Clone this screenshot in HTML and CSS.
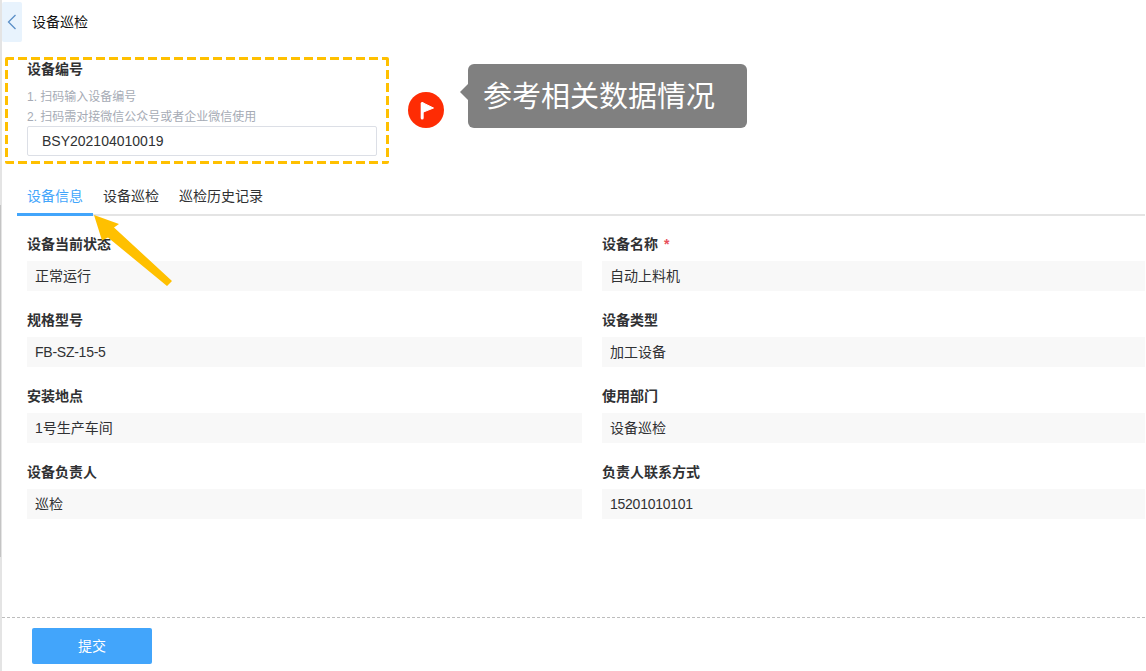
FILE: index.html
```html
<!DOCTYPE html>
<html lang="zh-CN">
<head>
<meta charset="utf-8">
<title>设备巡检</title>
<link rel="stylesheet" href="styles.css">
</head>
<body>
<div class="page">
  <header class="header">
    <button class="back" type="button" aria-label="返回">
      <svg width="10" height="16" viewBox="0 0 10 16"><path d="M8.500 1 L1.500 8 L8.500 15" fill="none" stroke="#5b8fc7" stroke-width="1.3"/></svg>
    </button>
    <h1 class="title">设备巡检</h1>
  </header>

  <section class="code-row">
    <div class="code-box">
      <div class="label">设备编号</div>
      <div class="hint hint-first">1. 扫码输入设备编号</div>
      <div class="hint">2. 扫码需对接微信公众号或者企业微信使用</div>
      <div class="code-input">BSY202104010019</div>
    </div>
    <svg class="flag" width="36" height="36" viewBox="0 0 36 36"><circle cx="18" cy="18" r="18" fill="#fe2c04"/><path d="M14.200 11.500 L14.200 26" stroke="#fff" stroke-width="3" stroke-linecap="round"/><path d="M14.200 10.500 L25.500 16 L14.200 20.500 Z" fill="#fff" stroke="#fff" stroke-width="1" stroke-linejoin="round"/></svg>
    <div class="callout">参考相关数据情况</div>
  </section>

  <nav class="tabs">
    <a class="tab tab-active">设备信息</a>
    <a class="tab">设备巡检</a>
    <a class="tab">巡检历史记录</a>
    <svg class="arrow" width="84" height="80" viewBox="0 0 84 80"><path d="M1 3 L26 12 L21 15.500 L79 69 L74 74 L15 25.500 L9 28.500 Z" fill="#ffc000"/></svg>
  </nav>

  <main class="fields">
    <div class="field"><div class="label">设备当前状态</div><div class="value">正常运行</div></div>
    <div class="field"><div class="label">设备名称<span class="req">*</span></div><div class="value">自动上料机</div></div>
    <div class="field"><div class="label">规格型号</div><div class="value value-code">FB-SZ-15-5</div></div>
    <div class="field"><div class="label">设备类型</div><div class="value">加工设备</div></div>
    <div class="field"><div class="label">安装地点</div><div class="value">1号生产车间</div></div>
    <div class="field"><div class="label">使用部门</div><div class="value">设备巡检</div></div>
    <div class="field"><div class="label">设备负责人</div><div class="value">巡检</div></div>
    <div class="field"><div class="label">负责人联系方式</div><div class="value value-code">15201010101</div></div>
  </main>

  <footer class="footer">
    <button class="submit" type="button">提交</button>
  </footer>
</div>
</body>
</html>
```
FILE: styles.css
```css
* { box-sizing: border-box; }
html, body { margin: 0; height: 100%; overflow: hidden; background: #fff; }
body { font-family: "Liberation Sans", "Noto Sans CJK SC", sans-serif; font-size: 14px; color: #303133; }
.page { position: relative; width: 1145px; height: 671px; border-left: 2px solid #e4e4e4; display: flex; flex-direction: column; }
.page::before { content: ""; position: absolute; left: -2px; top: 205px; width: 1px; height: 352px; background: #c4c4c4; }
.header { display: flex; align-items: center; height: 40px; margin-top: 2px; }
.back { width: 20px; height: 40px; padding: 0; border: 0; border-radius: 2px; background: #e8f3fd; display: flex; align-items: center; justify-content: center; }
.title { margin: 0 0 2px 10px; font-size: 14px; font-weight: 400; color: #111; }
.code-row { display: flex; align-items: flex-start; margin: 15px 0 0 3px; height: 107px; }
.code-box {
  width: 384px; height: 107px; padding: 3px 12px 0 22px; border-radius: 2px;
  background:
    repeating-linear-gradient(90deg, #ffc000 0 9px, transparent 9px 13px) 0 0 / 100% 3px no-repeat,
    repeating-linear-gradient(90deg, #ffc000 0 9px, transparent 9px 13px) 0 100% / 100% 3px no-repeat,
    repeating-linear-gradient(180deg, #ffc000 0 9px, transparent 9px 13px) 0 0 / 3px 100% no-repeat,
    repeating-linear-gradient(180deg, #ffc000 0 9px, transparent 9px 13px) 100% 0 / 3px 100% no-repeat;
}
.label { height: 18px; line-height: 18px; font-size: 14px; font-weight: 700; color: #303133; }
.hint { height: 20px; line-height: 20px; font-size: 12px; color: #a6abb5; }
.hint-first { margin-top: 9px; }
.code-input { height: 30px; line-height: 28px; margin-top: -1px; padding-left: 14px; border: 1px solid #dcdfe6; border-radius: 2px; font-size: 14px; color: #303133; }
.flag { margin: 35px 0 0 19px; flex: none; }
.callout { position: relative; flex: none; width: 279px; height: 64px; margin: 7px 0 0 24px; padding: 3px 0 0 15px; line-height: 60px; font-size: 29px; color: #fff; background: #808080; border-radius: 6px; }
.callout::before { content: ""; position: absolute; left: -8px; top: 20px; border: 8px solid transparent; border-left: 0; border-right-color: #808080; }
.tabs { position: relative; display: flex; margin: 22px 0 0 15px; height: 30px; border-bottom: 2px solid #e4e4e4; }
.tab { height: 30px; padding: 0 10px; line-height: 20px; font-size: 14px; color: #303133; border-bottom: 3px solid transparent; flex: none; }
.tab-active { color: #42a5fb; border-bottom-color: #42a5fb; }
.arrow { position: absolute; left: 76px; top: 26px; }
.fields { display: grid; grid-template-columns: 555px 1fr; column-gap: 20px; row-gap: 10px; margin: 19px 0 0 25px; }
.field { height: 66px; }
.fields .label { height: 26px; }
.value { height: 30px; line-height: 31px; padding-left: 8px; background: #f8f8f8; font-size: 14px; color: #303133; }
.value-code { letter-spacing: -0.25px; }
.req { margin-left: 6px; color: #e8505b; font-weight: 700; }
.footer { margin-top: auto; height: 54px; padding: 10px 0 0 30px; border-top: 1px dashed #bdbdbd; }
.submit { width: 120px; height: 36px; padding: 0 0 2px; border: 0; border-radius: 2px; background: #42a5fb; color: #fff; font-family: inherit; font-size: 14px; }
```
